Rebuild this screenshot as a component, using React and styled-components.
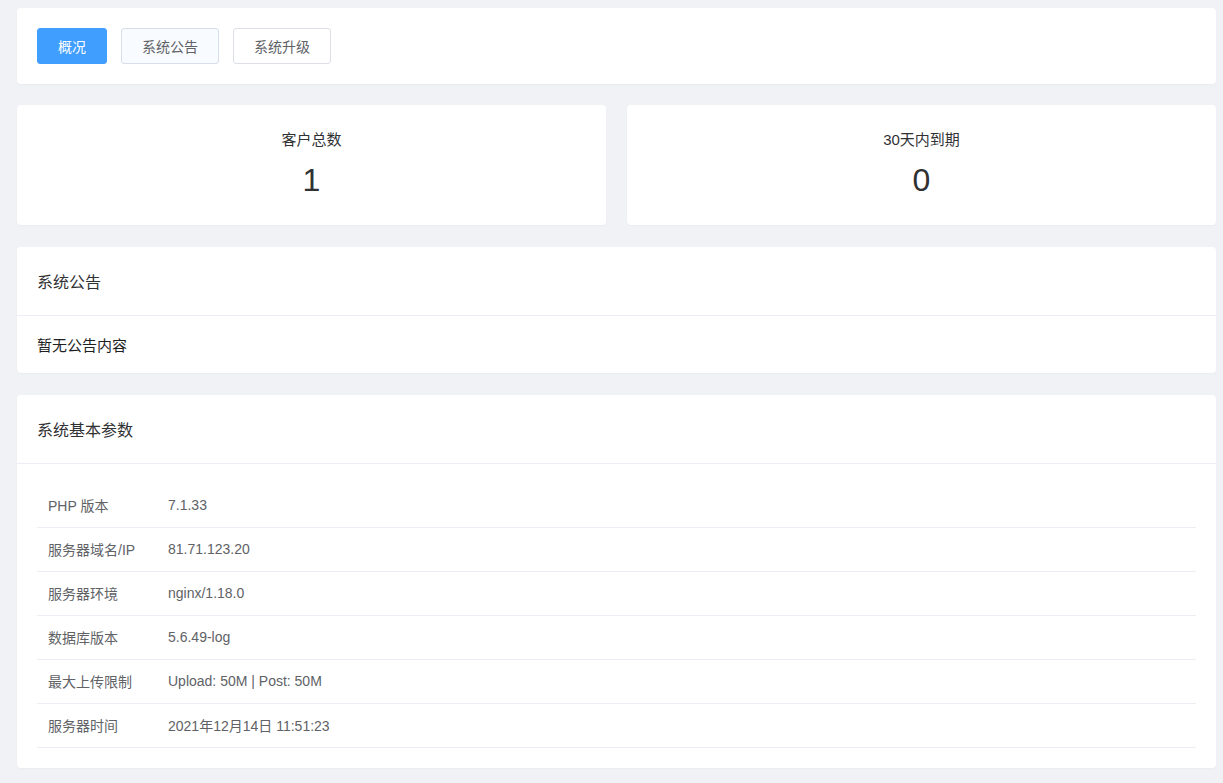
import React from 'react';
import styled, { createGlobalStyle } from 'styled-components';

const GlobalStyle = createGlobalStyle`
  html, body {
    margin: 0;
    padding: 0;
    background: #f0f2f5;
    font-family: "Liberation Sans", "Noto Sans CJK SC", sans-serif;
    color: #303133;
  }
`;

const tabs = [
  { label: '概况', active: true },
  { label: '系统公告', hover: true },
  { label: '系统升级' },
];

const stats = [
  { label: '客户总数', value: 1 },
  { label: '30天内到期', value: 0 },
];

const params = [
  ['PHP 版本', '7.1.33'],
  ['服务器域名/IP', '81.71.123.20'],
  ['服务器环境', 'nginx/1.18.0'],
  ['数据库版本', '5.6.49-log'],
  ['最大上传限制', 'Upload: 50M | Post: 50M'],
  ['服务器时间', '2021年12月14日 11:51:23'],
];

const App = () => {
  return (
    <>
      <GlobalStyle />
      <Page>
        <Card>
          <Toolbar>
            {tabs.map((t) => (
              <TabButton key={t.label} $active={t.active} $hover={t.hover}>
                {t.label}
              </TabButton>
            ))}
          </Toolbar>
        </Card>

        <StatRow>
          {stats.map((s) => (
            <StatCard key={s.label}>
              <StatLabel>{s.label}</StatLabel>
              <StatValue>{s.value}</StatValue>
            </StatCard>
          ))}
        </StatRow>

        <Card>
          <CardHeader>系统公告</CardHeader>
          <NoticeBody>暂无公告内容</NoticeBody>
        </Card>

        <Card>
          <CardHeader>系统基本参数</CardHeader>
          <TableBody>
            <Table>
              <tbody>
                {params.map(([k, v]) => (
                  <Row key={k}>
                    <KeyCell>{k}</KeyCell>
                    <ValueCell>{v}</ValueCell>
                  </Row>
                ))}
              </tbody>
            </Table>
          </TableBody>
        </Card>
      </Page>
    </>
  );
};

const Page = styled.div`
  display: flex;
  flex-direction: column;
  gap: 22px;
  padding: 8px 7px 14px 17px;
`;

const Card = styled.div`
  background: #fff;
  border-radius: 4px;
  box-shadow: 0 1px 2px rgba(0, 0, 0, 0.03);
`;

const Toolbar = styled.div`
  display: flex;
  gap: 14px;
  padding: 20px;
`;

const TabButton = styled.button`
  height: 36px;
  padding: 0 20px;
  font-family: inherit;
  font-size: 14px;
  border-radius: 3px;
  cursor: pointer;
  border: 1px solid ${(p) => (p.$active ? '#409eff' : p.$hover ? '#d6deeb' : '#dcdfe6')};
  background: ${(p) => (p.$active ? '#409eff' : p.$hover ? '#f8fbff' : '#fff')};
  color: ${(p) => (p.$active ? '#fff' : '#606266')};
`;

const StatRow = styled.div`
  display: grid;
  grid-template-columns: 1fr 1fr;
  gap: 21px;
  margin-top: -1px;
`;

const StatCard = styled(Card)`
  height: 120px;
  display: flex;
  flex-direction: column;
  align-items: center;
  justify-content: center;
  gap: 13px;
  padding-bottom: 2px;
  box-sizing: border-box;
`;

const StatLabel = styled.div`
  font-size: 15px;
  line-height: 18px;
  color: #303133;
`;

const StatValue = styled.div`
  font-size: 32px;
  line-height: 36px;
  color: #303133;
`;

const CardHeader = styled.div`
  height: 68px;
  display: flex;
  align-items: center;
  padding: 0 20px;
  font-size: 16px;
  color: #303133;
  border-bottom: 1px solid #ebeef5;
`;

const NoticeBody = styled.div`
  height: 57px;
  display: flex;
  align-items: center;
  padding: 0 20px;
  font-size: 15px;
  color: #1f1f1f;
`;

const TableBody = styled.div`
  padding: 19px 20px 20px;
`;

const Table = styled.table`
  width: 100%;
  border-collapse: collapse;
  font-size: 14px;
  color: #606266;
`;

const Row = styled.tr`
  height: 44px;
  border-bottom: 1px solid #ebeef5;
`;

const KeyCell = styled.td`
  width: 120px;
  padding: 0 0 0 11px;
`;

const ValueCell = styled.td`
  padding: 0;
`;

export default App;
